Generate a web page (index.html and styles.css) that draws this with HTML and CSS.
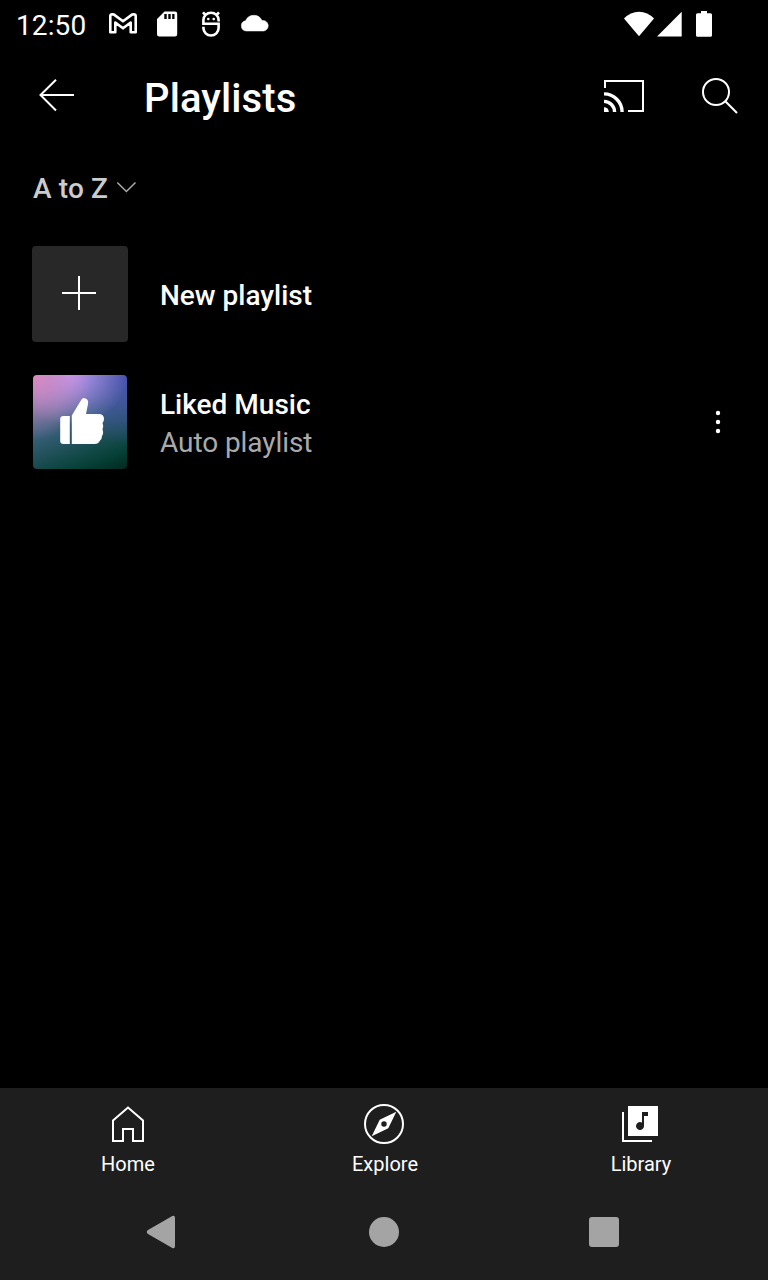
FILE: index.html
```html
<!DOCTYPE html>
<html lang="en">
<head>
<meta charset="utf-8">
<title>Playlists</title>
<link rel="stylesheet" href="styles.css">
</head>
<body>
<div class="screen">
  <div class="status">
    <span class="clock">12:50</span>
    <svg class="notifications" width="166" height="48" viewBox="106 0 166 48">
      <path d="M110.300 16V32.300H115.300V22.500L123 28.300L130.700 22.500V32.300H135.700V16Q135.700 14.200 133.800 14.200L132 14.600L123 21.300L114 14.600L112.200 14.200Q110.300 14.200 110.300 16Z" fill="none" stroke="#fff" stroke-width="2.600" stroke-linejoin="round"/>
      <path fill-rule="evenodd" d="M164.500 11.500H175Q177.200 11.500 177.200 13.700V34.300Q177.200 36.500 175 36.500H159.200Q157 36.500 157 34.300V19ZM164.300 14V19H166.700V14ZM168.300 14V19H170.700V14ZM172.200 14V19H174.500V14Z" fill="#fff"/>
      <path d="M218.600 21.500V20A7.600 7.200 0 0 0 203.400 20V23.700H218.600V28A7.600 7.500 0 0 1 203.400 28V26.800M205.500 15L203 12.300M216.500 15L219 12.300" fill="none" stroke="#fff" stroke-width="2.600"/>
      <circle cx="208.300" cy="19" r="1.300" fill="#fff"/><circle cx="213.700" cy="19" r="1.300" fill="#fff"/>
      <path d="M246.200 31A5.200 5.200 0 0 1 245.600 20.700A9 9 0 0 1 262 20.500A5.300 5.300 0 0 1 263.800 31Z" fill="#fff" stroke="#fff" stroke-width="0.500"/>
    </svg>
    <svg class="signals" width="92" height="48" viewBox="622 0 92 48">
      <path d="M624 18.500Q630.500 11.700 639 11.700T654 18.500L639 36.300Z" fill="#fff"/>
      <path d="M657 36.500L681.700 11.700V36.500Z" fill="#fff"/>
      <path d="M701 11H707V13.300H710.500Q712 13.300 712 14.800V35.300Q712 36.800 710.500 36.800H697.500Q696 36.800 696 35.300V14.800Q696 13.300 697.500 13.300H701Z" fill="#fff"/>
    </svg>
  </div>

  <header class="appbar">
    <svg width="40" height="40" viewBox="36 76 40 40" fill="none" stroke="#fff" stroke-width="2"><path d="M74 95H40.500M56 79.700L40.500 95L56 110.500"/></svg>
    <h1>Playlists</h1>
    <svg class="cast" width="44" height="36" viewBox="602 78 44 36" fill="none" stroke="#fff">
      <path d="M605 88V81H643V111H628" stroke-width="2"/>
      <path d="M604 93.900A18.100 18.100 0 0 1 622.100 112M604 101.400A10.600 10.600 0 0 1 614.600 112" stroke-width="3.400"/>
      <path d="M604 107.200A4.800 4.800 0 0 1 608.800 112H604Z" fill="#fff" stroke="none"/>
    </svg>
    <svg class="search" width="40" height="40" viewBox="700 76 40 40" fill="none" stroke="#fff" stroke-width="2"><circle cx="716" cy="92" r="13"/><path d="M725.300 101.300L737 113"/></svg>
  </header>

  <div class="sort">
    <span>A to Z</span>
    <svg width="22" height="14" viewBox="115 181 22 14"><path d="M117.300 182.500L126.400 191.500L135.500 182.500" fill="none" stroke="#aaa" stroke-width="1.500"/></svg>
  </div>

  <main class="list">
    <div class="row">
      <div class="thumb new"><svg width="96" height="96" viewBox="0 0 96 96"><path d="M30 47H64M47 30V64" stroke="#fff" stroke-width="2"/></svg></div>
      <div class="name">New playlist</div>
    </div>
    <div class="row">
      <div class="thumb liked">
        <svg width="94" height="94" viewBox="33 375 94 94" fill="#fff">
          <path d="M63.500 416H69.800V444H63.500Q60.200 444 60.200 440.700V419.300Q60.200 416 63.500 416Z"/>
          <path d="M71.800 444V415.500L81.500 399.500Q83 397 85.500 398.600Q88.800 400 88 404L86 414H99.500Q104 414.500 104 419Q104 421.500 102.500 423Q104.200 426.500 102.500 429.500Q104 433 102 436Q102 439 100 440.500Q98.500 444 94.500 444Z"/>
        </svg>
      </div>
      <div class="copy"><div class="name">Liked Music</div><div class="detail">Auto playlist</div></div>
      <svg class="more" width="8" height="28" viewBox="714 408 8 28" fill="#fff"><circle cx="718" cy="413" r="2.200"/><circle cx="718" cy="422" r="2.200"/><circle cx="718" cy="431" r="2.200"/></svg>
    </div>
  </main>

  <nav class="tabs">
    <div class="tab">
      <svg width="40" height="40" viewBox="108 1104 40 40"><path d="M113 1141V1120.500L128 1107.500L143 1120.500V1141H133V1129H123V1141Z" fill="none" stroke="#fff" stroke-width="2"/></svg>
      <span>Home</span>
    </div>
    <div class="tab">
      <svg width="40" height="40" viewBox="364 1104 40 40"><circle cx="384" cy="1124" r="19" fill="none" stroke="#fff" stroke-width="2"/><path fill-rule="evenodd" d="M396.300 1111.700L388.300 1128.300L371.700 1136.300L379.700 1119.700ZM384 1121.300A2.700 2.700 0 1 0 384 1126.700A2.700 2.700 0 1 0 384 1121.300Z" fill="#fff"/></svg>
      <span class="nudge">Explore</span>
    </div>
    <div class="tab">
      <svg width="40" height="40" viewBox="620 1104 40 40"><path d="M623 1112V1141H652" fill="none" stroke="#fff" stroke-width="2"/><path d="M628 1106H658V1136H628Z" fill="#fff"/><path d="M642 1112H648V1116H644V1126A4 4 0 1 1 642 1122.600Z" fill="#1e1e1e"/></svg>
      <span class="nudge">Library</span>
    </div>
  </nav>
  <div class="system">
    <svg width="30" height="34" viewBox="146 1215 30 34"><path d="M148 1230L172.300 1216Q175 1215 175 1218V1246Q175 1249 172.300 1248L148 1234Q145.500 1232 148 1230Z" fill="#a4a4a4"/></svg>
    <div class="home"></div>
    <div class="recents"></div>
  </div>
</div>
</body>
</html>
```

FILE: styles.css
```css
* { box-sizing: border-box; }
body { margin: 0; background: #000; }
svg { display: block; flex: none; }
.screen {
  width: 768px;
  height: 1280px;
  display: flex;
  flex-direction: column;
  background: #000;
  color: #fff;
  font-family: Roboto, "Liberation Sans", sans-serif;
  font-size: 28px;
  overflow: hidden;
}
.status { height: 48px; display: flex; padding: 0 54px 0 16px; }
.clock { width: 90px; line-height: 52px; letter-spacing: 0.1px; }
.signals { margin-left: auto; }
.appbar { height: 96px; display: flex; align-items: center; padding: 0 28px 0 36px; }
.appbar h1 { flex: 1; margin: 6px 0 0 68px; font-size: 40px; line-height: 48px; font-weight: 500; letter-spacing: 0.1px; }
.search { margin-left: 54px; }
.sort {
  height: 88px;
  display: flex;
  align-items: center;
  gap: 7px;
  padding-left: 33px;
  color: #ccc;
  font-weight: 500;
  letter-spacing: 0.15px;
}
.list { flex: 1; padding: 14px 46px 0 32px; }
.row { height: 96px; margin-bottom: 32px; display: flex; align-items: center; }
.thumb { flex: none; margin-right: 32px; overflow: hidden; border-radius: 4px; }
.new { background: #282828; }
.liked {
  margin: 0 33px 0 1px;
  background:
    radial-gradient(ellipse 58px 65px at 0 0, #dc8abf 0%, #dc8abf00 100%),
    radial-gradient(ellipse 60px 50px at 38% 0, #bb96f5 0%, #bb96f500 100%),
    radial-gradient(ellipse 60px 70px at 100% 0, #434fab 0%, #434fab00 100%),
    linear-gradient(160deg, #6a7ab0 5%, #3d6280 45%, #064137 85%, #022820 100%);
}
.name { line-height: 38px; font-weight: 500; margin-top: 4px; }
.copy { padding-top: 4px; }
.copy .name { margin-top: 0; }
.detail { line-height: 38px; color: #aaa; letter-spacing: -0.08px; }
.more { margin-left: auto; }
.tabs { height: 96px; display: flex; background: #1e1e1e; }
.tab {
  flex: 1;
  display: flex;
  flex-direction: column;
  align-items: center;
  padding-top: 16px;
  font-size: 20px;
  line-height: 24px;
}
.tab span { margin-top: 8px; }
.tab .nudge { padding-left: 2px; }
.system {
  height: 96px;
  display: flex;
  justify-content: space-between;
  align-items: center;
  padding: 0 149px 0 146px;
  background: #1e1e1e;
}
.home { width: 30px; height: 30px; margin-left: 2px; border-radius: 50%; background: #a4a4a4; }
.recents { width: 30px; height: 30px; border-radius: 3px; background: #a4a4a4; }
```
